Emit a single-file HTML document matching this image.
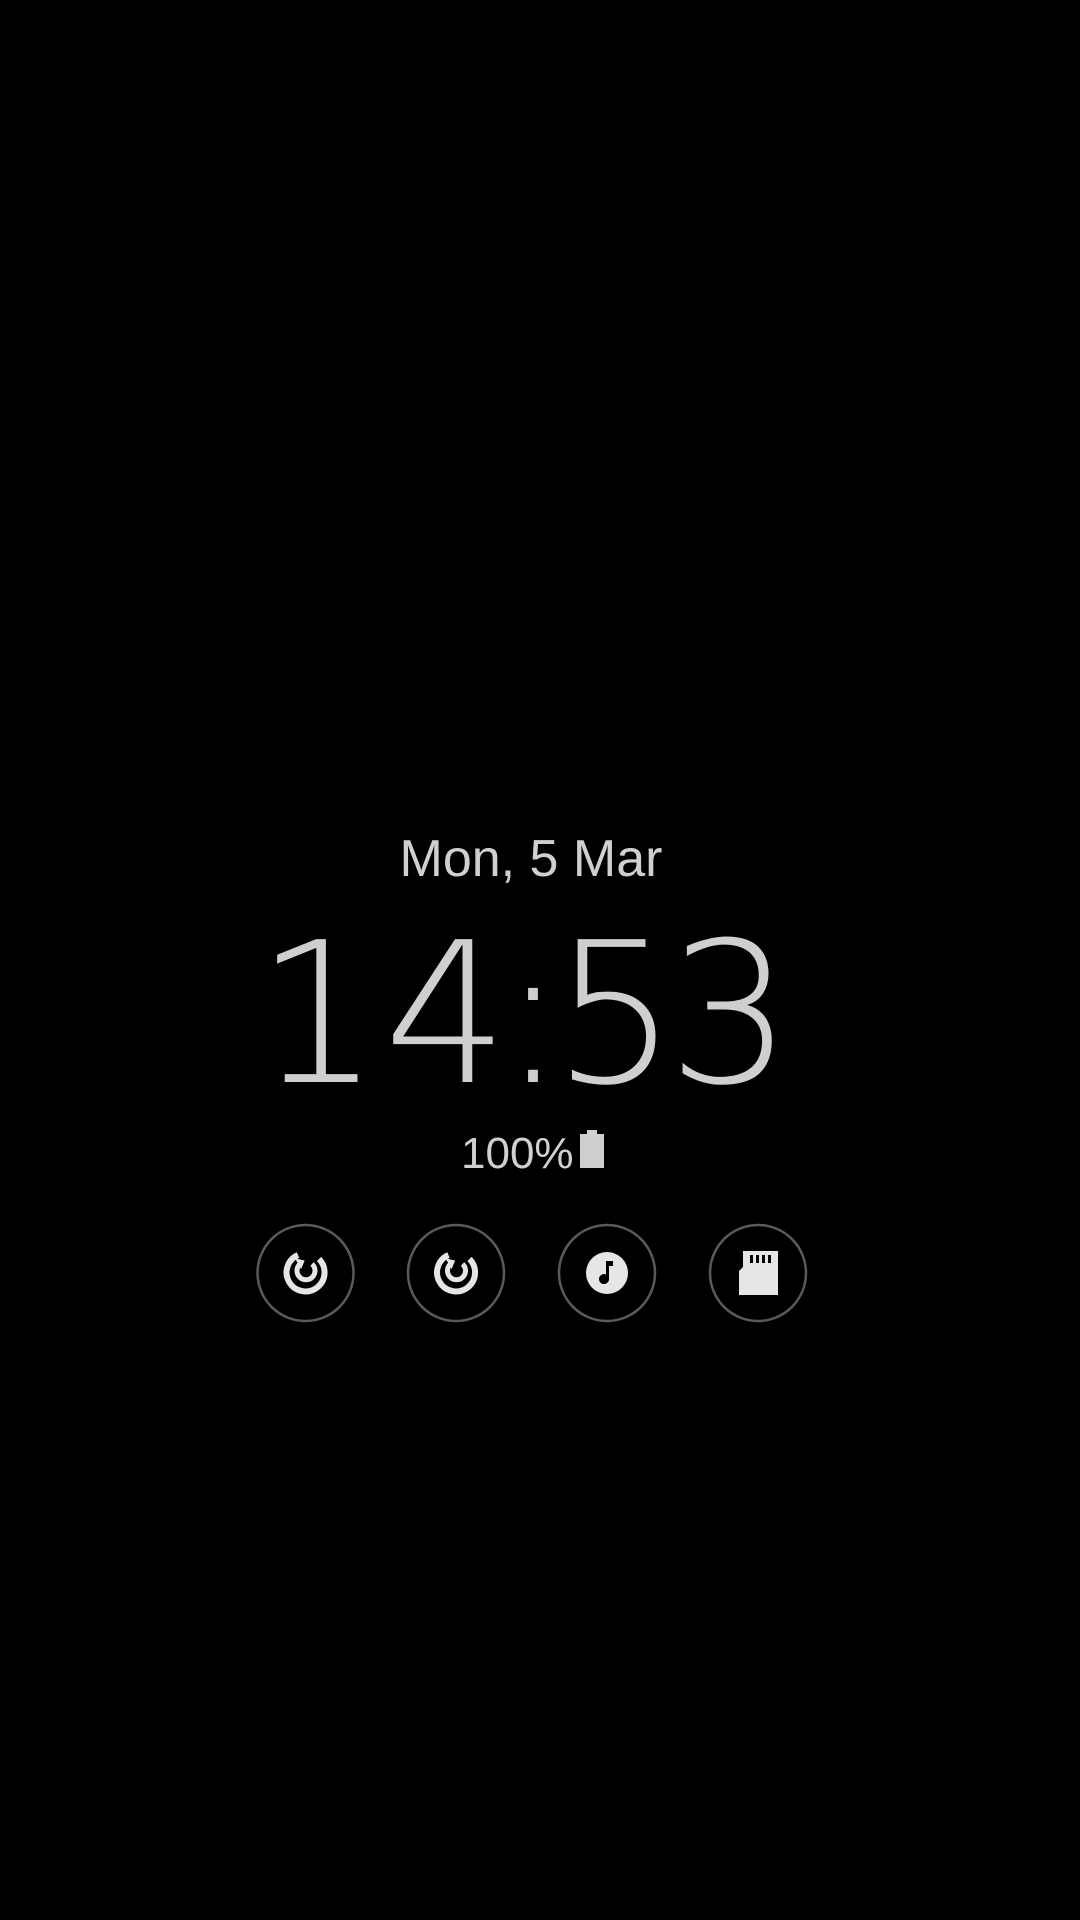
<!DOCTYPE html>
<html><head><meta charset="utf-8"><style>
html,body{margin:0;padding:0;background:#000;width:1080px;height:1920px;overflow:hidden;position:relative}
.t{position:absolute;color:#d0d0d0;font-family:"Liberation Sans",sans-serif;white-space:nowrap}
#date{left:-9px;width:1080px;text-align:center;top:829px;font-size:52px;line-height:60px}
.d{position:absolute;top:917px;width:200px;margin-left:-100px;text-align:center;font-size:196px;line-height:196px;font-family:"DejaVu Sans ExtraLight","DejaVu Sans",sans-serif;font-weight:200;color:#cfcfcf}
#bat{left:461px;top:1124px;font-size:44px;line-height:60px}
.batt{position:absolute;left:580px;top:1134px;width:24px;height:34px;background:#cfcfcf}
.batt:before{content:"";position:absolute;left:7px;top:-4px;width:10px;height:4px;background:#cfcfcf}
svg{position:absolute;left:0;top:0}
</style></head><body>
<div id="date" class="t">Mon, 5 Mar</div>
<div class="d" style="left:318px">1</div>
<div class="d" style="left:446px">4</div>
<div class="d" style="left:533px">:</div>
<div class="d" style="left:615px">5</div>
<div class="d" style="left:730px">3</div>
<div id="bat" class="t">100%</div>
<div class="batt"></div>
<svg width="1080" height="1920" viewBox="0 0 1080 1920">
<g fill="none" stroke="#5a5a5a" stroke-width="2.5">
<circle cx="305.5" cy="1273" r="48"/>
<circle cx="456" cy="1273" r="48"/>
<circle cx="607" cy="1273" r="48"/>
<circle cx="758" cy="1273" r="48"/>
</g>
<g fill="none" stroke="#e6e6e6">
<path d="M319 1259 A19 19 0 1 1 298 1255" stroke-width="6"/>
<path d="M312 1264 A9 9 0 1 1 300 1264" stroke-width="5"/>
<path d="M296 1259 l8 2 l-3 7 z" fill="#e6e6e6" stroke-width="1"/>
</g>
<g transform="translate(150.5,0)" fill="none" stroke="#e6e6e6">
<path d="M319 1259 A19 19 0 1 1 298 1255" stroke-width="6"/>
<path d="M312 1264 A9 9 0 1 1 300 1264" stroke-width="5"/>
<path d="M296 1259 l8 2 l-3 7 z" fill="#e6e6e6" stroke-width="1"/>
</g>
<circle cx="607" cy="1273" r="21" fill="#e6e6e6"/>
<path d="M606 1261 h7 v5 h-4 v13 a5 5 0 1 1 -3 -4.5 z" fill="#000"/>
<path d="M743 1251 h35 v44 h-39 v-24 l4 -4 z" fill="#e6e6e6"/>
<g fill="#000"><rect x="750" y="1255" width="3" height="8"/><rect x="756" y="1255" width="3" height="8"/><rect x="762" y="1255" width="3" height="8"/><rect x="768" y="1255" width="3" height="8"/></g>
</svg>
</body></html>
